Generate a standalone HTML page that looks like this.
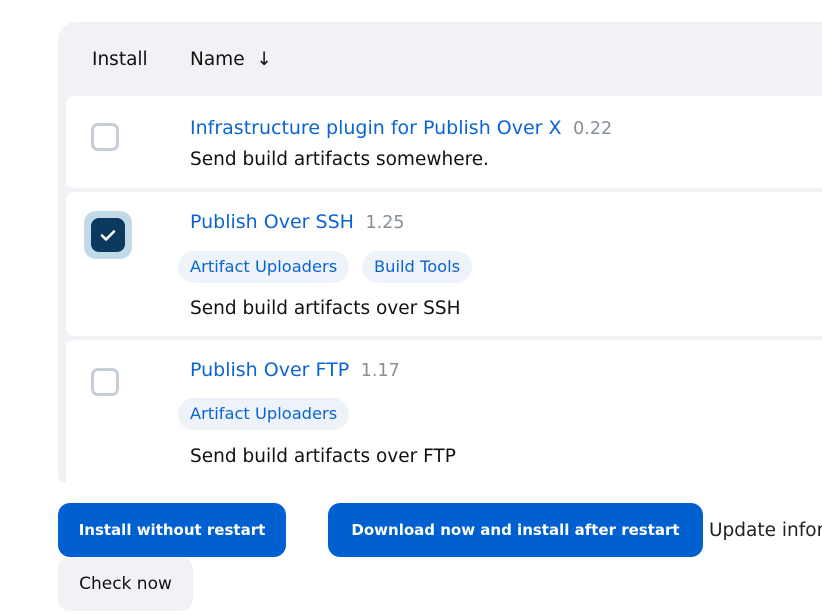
<!DOCTYPE html><html><head><style>
body{margin:0;width:822px;height:614px;overflow:hidden;background:#fff;font-family:"DejaVu Sans",sans-serif;position:relative}
.a{position:absolute;white-space:nowrap}
.tbl{position:absolute;left:58px;top:22px;width:800px;height:470px;background:#f2f2f6;border-radius:18px}
.row{position:absolute;left:66px;width:780px;background:#fff;border-radius:8px}
.cb{position:absolute;left:91px;width:28px;height:28px;box-sizing:border-box;border:3px solid #c5ced6;border-radius:7px;background:#fff}
.t{font-size:19px;color:#0b64d0}
.v{font-size:17.5px;color:#868e96}
.d{font-size:18.5px;color:#111}
.tag{position:absolute;height:32px;line-height:32px;padding:0 12px;background:#eef3fa;color:#0b64d0;font-size:16.3px;border-radius:16px}
.btn{position:absolute;height:54px;line-height:54px;border-radius:12px;background:#0060d0;color:#fff;font-weight:bold;font-size:15px;text-align:center}
</style></head><body>
<div class="tbl"></div>
<div class="a" style="left:92px;top:49px;font-size:18.5px;color:#111">Install</div>
<div class="a" style="left:190px;top:49px;font-size:18.5px;color:#111">Name &nbsp;↓</div>
<div class="row" style="top:96px;height:92px"></div>
<div class="cb" style="top:123px"></div>
<div class="a t" style="left:190px;top:117px">Infrastructure plugin for Publish Over X <span class="v">&nbsp;0.22</span></div>
<div class="a d" style="left:190px;top:149px">Send build artifacts somewhere.</div>
<div class="row" style="top:192px;height:144px"></div>
<div style="position:absolute;left:84px;top:211px;width:48px;height:48px;border-radius:12px;background:#c2dae8"></div>
<div style="position:absolute;left:91px;top:218px;width:34px;height:34px;border-radius:8px;background:#0b3a5e"></div>
<svg class="a" style="left:91px;top:218px" width="34" height="34"><path d="M11 17.5l4 4 8-8" stroke="#fff" stroke-width="2.6" fill="none" stroke-linecap="round" stroke-linejoin="round"/></svg>
<div class="a t" style="left:190px;top:211px">Publish Over SSH <span class="v">&nbsp;1.25</span></div>
<div class="tag" style="left:178px;top:251px">Artifact Uploaders</div>
<div class="tag" style="left:362px;top:251px">Build Tools</div>
<div class="a d" style="left:190px;top:298px">Send build artifacts over SSH</div>
<div class="row" style="top:340px;height:150px"></div>
<div class="cb" style="top:368px"></div>
<div class="a t" style="left:190px;top:359px">Publish Over FTP <span class="v">&nbsp;1.17</span></div>
<div class="tag" style="left:178px;top:398px">Artifact Uploaders</div>
<div class="a d" style="left:190px;top:446px">Send build artifacts over FTP</div>
<div style="position:absolute;left:0;top:482px;width:822px;height:132px;background:#fff"></div>
<div class="btn" style="left:58px;top:503px;width:228px">Install without restart</div>
<div class="btn" style="left:328px;top:503px;width:375px">Download now and install after restart</div>
<div class="a" style="left:709px;top:520px;font-size:18.5px;color:#222">Update information</div>
<div class="a" style="left:58px;top:557px;width:135px;height:54px;line-height:54px;text-align:center;border-radius:12px;background:#f2f2f6;font-size:17px;color:#111">Check now</div>
</body></html>
